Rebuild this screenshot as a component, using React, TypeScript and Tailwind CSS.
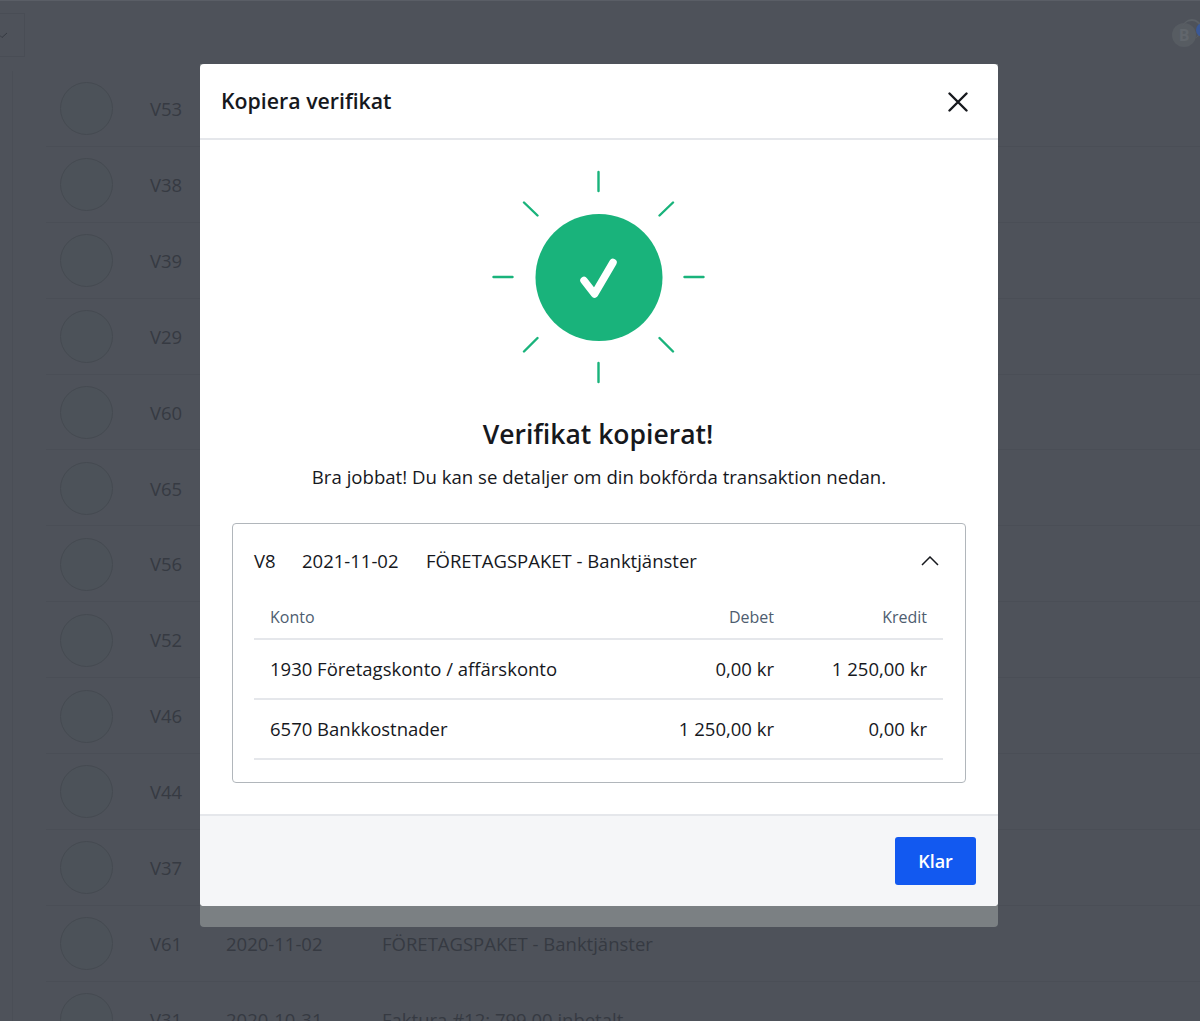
const FONT = "font-['Open_Sans','Noto_Sans',sans-serif]";

const rows = [
  { id: "V53" },
  { id: "V38" },
  { id: "V39" },
  { id: "V29" },
  { id: "V60" },
  { id: "V65" },
  { id: "V56" },
  { id: "V52" },
  { id: "V46" },
  { id: "V44" },
  { id: "V37" },
  { id: "V61", date: "2020-11-02", text: "FÖRETAGSPAKET - Banktjänster" },
  { id: "V31", date: "2020-10-31", text: "Faktura #12: 799,00 inbetalt" },
];

const BackgroundRow = ({ row }: { row: { id: string; date?: string; text?: string } }) => (
  <div className="flex h-[75.9px] shrink-0 items-center border-b border-[#4a4e56] pl-[14px] pt-[1px]">
    <div className="h-[53px] w-[53px] shrink-0 rounded-full border border-[#454a51] bg-[#4c5259]" />
    <span className="ml-[37px] w-[76px] shrink-0 text-[18.500px] text-[#363a42]">{row.id}</span>
    {row.date && <span className="w-[156px] shrink-0 text-[18.500px] text-[#363a42]">{row.date}</span>}
    {row.text && <span className="text-[18.500px] text-[#363a42]">{row.text}</span>}
  </div>
);

const Rays = () => (
  <svg width="216" height="216" viewBox="0.5 0 216 216" fill="none" className="shrink-0">
    <g stroke="#19b37b" strokeWidth="2.400" strokeLinecap="round">
      <path d="M108 3v19M108 194v19M3 108h19M194 108h19" />
      <path d="M33.500 33.500l13.500 13M182.500 33.500l-13.500 13M33.500 182.500l13.500-13.500M182.500 182.500l-13.500-13.500" />
    </g>
    <circle cx="108.500" cy="108.500" r="63.500" fill="#19b37b" />
    <path d="M93.500 111.500l10.500 13.500L122.500 93.500" stroke="#fff" strokeWidth="7.500" strokeLinecap="round" strokeLinejoin="round" />
  </svg>
);

const lines = [
  { account: "1930 Företagskonto / affärskonto", debit: "0,00 kr", credit: "1 250,00 kr" },
  { account: "6570 Bankkostnader", debit: "1 250,00 kr", credit: "0,00 kr" },
];

const Modal = () => (
  <div className="absolute inset-0 flex justify-center pr-[2px] pt-16">
    <div className="h-[863px] w-[798px] rounded-b bg-[#7b8083]">
      <div className="flex h-[842px] flex-col overflow-hidden rounded bg-white">
        <div className="flex h-[76px] shrink-0 items-center justify-between border-b-2 border-[#e5e7eb] pl-[21px] pr-[30px]">
          <h2 className="text-[21.300px] font-semibold text-[#16181d]">Kopiera verifikat</h2>
          <svg width="20" height="20" viewBox="0 0 20 20" fill="none" stroke="#16181d" strokeWidth="2.400" strokeLinecap="round" className="mt-[2px]">
            <path d="M1.500 1.500l17 17M18.500 1.500l-17 17" />
          </svg>
        </div>
        <div className="flex flex-1 flex-col items-center pt-[29px]">
          <Rays />
          <h1 className="mr-[2px] mt-[31px] text-[26.500px] leading-9 font-semibold text-[#16181d]">Verifikat kopierat!</h1>
          <p className="mt-[11px] text-[18.600px] leading-7 text-[#16181d]">
            Bra jobbat! Du kan se detaljer om din bokförda transaktion nedan.
          </p>
          <div className="mt-[32px] w-[734px] rounded border border-[#b1b6bb] pl-[21px] pr-[22px]">
            <div className="flex h-[75px] items-center pb-[2px] text-[18.500px] text-[#16181d]">
              <span className="w-[48px]">V8</span>
              <span className="w-[124px]">2021-11-02</span>
              <span>FÖRETAGSPAKET - Banktjänster</span>
              <svg width="18" height="10" viewBox="0 0 18 10" fill="none" stroke="#16181d" strokeWidth="1.500" className="ml-auto mr-[4px]">
                <path d="M1 9l8-8 8 8" />
              </svg>
            </div>
            <div className="mb-[22px]">
              <div className="flex h-[41px] items-center border-b-2 border-[#e5e7eb] px-4 pb-[4px] text-base text-[#4e5d70]">
                <span className="flex-1">Konto</span>
                <span className="w-[120px] text-right">Debet</span>
                <span className="w-[153px] text-right">Kredit</span>
              </div>
              {lines.map((line) => (
                <div key={line.account} className="flex h-[60px] items-center border-b-2 border-[#e5e7eb] px-4 text-[18.500px] text-[#16181d]">
                  <span className="flex-1">{line.account}</span>
                  <span className="w-[120px] text-right">{line.debit}</span>
                  <span className="w-[153px] text-right">{line.credit}</span>
                </div>
              ))}
            </div>
          </div>
        </div>
        <div className="flex h-[92px] shrink-0 items-center justify-end border-t-2 border-[#e5e7eb] bg-[#f5f6f8] pb-[1px] pr-[22px]">
          <button className="h-[48px] w-[81px] rounded-[3px] bg-[#1259f0] text-lg font-semibold text-white">Klar</button>
        </div>
      </div>
    </div>
  </div>
);

export default function App() {
  return (
    <div className={`relative h-[1021px] w-[1200px] overflow-hidden bg-[#4e525a] ${FONT}`}>
      <div className="flex h-[71px] items-start justify-between border-t border-[#5a5e66]">
        <div className="mt-[12px] flex h-[44px] w-[25px] items-center border border-l-0 border-[#494d55]">
          <svg width="8" height="6" viewBox="0 0 8 6" fill="none" stroke="#363a42" strokeWidth="1">
            <path d="M0 3.500l2 2L7 1" />
          </svg>
        </div>
        <div className="relative mr-[4px] mt-[22px] h-6 w-6 rounded-full bg-[#575c62] text-center text-base leading-6 font-bold text-[#61666c]">
          B
          <div className="absolute right-[-6px] top-[-4px] h-5 w-5 rounded-full border-2 border-b-0 border-l-0 border-[#5b6066]" />
          <div className="absolute right-[-14px] top-0 h-[14px] w-[14px] rounded-full bg-[#3a5896]" />
        </div>
      </div>
      <div className="ml-[12px] flex h-[950px] flex-col overflow-hidden border-l border-[#4a4e56] pl-[33px]">
        {rows.map((row) => (
          <BackgroundRow key={row.id} row={row} />
        ))}
      </div>
      <Modal />
    </div>
  );
}
